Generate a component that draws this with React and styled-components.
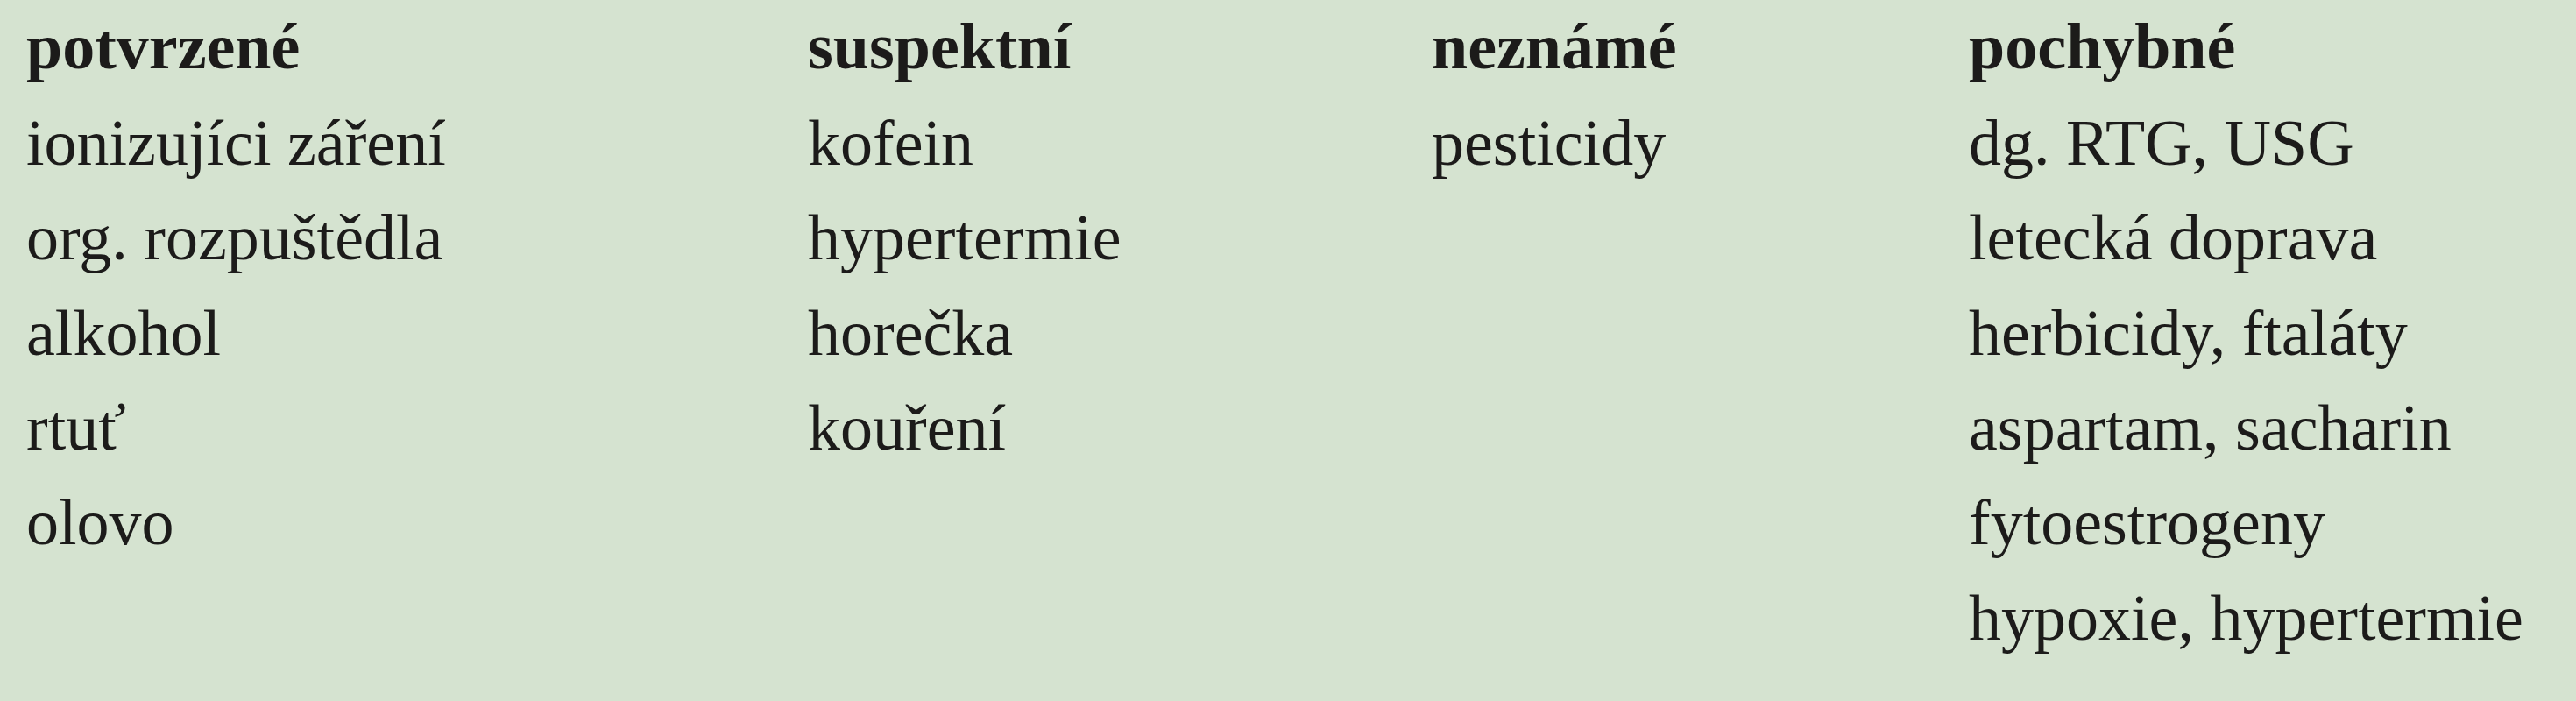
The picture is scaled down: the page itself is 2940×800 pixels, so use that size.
import React from 'react'
import styled, { createGlobalStyle } from 'styled-components'

const Global = createGlobalStyle`
  html, body {
    margin: 0;
    padding: 0;
    background-color: #d5e3d0;
  }
  #root {
    min-height: 800px;
  }
`

const Panel = styled.div`
  background-color: #d5e3d0;
  min-height: 800px;
  padding: 0 0 0 30px;
  display: grid;
  grid-template-columns: 892px 712px 613px 1fr;
  align-items: start;
  box-sizing: border-box;
`

const Column = styled.ul`
  list-style: none;
  margin: -1px 0 0 0;
  padding: 0;
  display: flex;
  flex-direction: column;
`

const Cell = styled.li`
  font-family: "Liberation Serif", "Times New Roman", serif;
  font-size: 74px;
  line-height: 108.4px;
  height: 108.4px;
  color: #1c1b1a;
  white-space: nowrap;
  font-weight: ${p => (p.$head ? 700 : 400)};
  margin-bottom: ${p => (p.$head ? '1.5px' : '0')};
`

const columns = [
  { title: 'potvrzené', items: ['ionizujíci záření', 'org. rozpuštědla', 'alkohol', 'rtuť', 'olovo'] },
  { title: 'suspektní', items: ['kofein', 'hypertermie', 'horečka', 'kouření'] },
  { title: 'neznámé', items: ['pesticidy'] },
  {
    title: 'pochybné',
    items: ['dg. RTG, USG', 'letecká doprava', 'herbicidy, ftaláty', 'aspartam, sacharin', 'fytoestrogeny', 'hypoxie, hypertermie'],
  },
]

export default function App() {
  return (
    <>
      <Global />
      <Panel>
        {columns.map(col => (
          <Column key={col.title}>
            <Cell $head>{col.title}</Cell>
            {col.items.map(it => (
              <Cell key={it}>{it}</Cell>
            ))}
          </Column>
        ))}
      </Panel>
    </>
  )
}
